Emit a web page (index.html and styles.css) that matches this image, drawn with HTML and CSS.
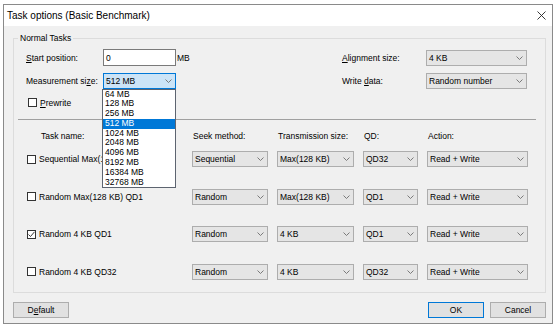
FILE: index.html
```html
<!DOCTYPE html>
<html>
  <head>
    <meta charset="utf-8" />
    <title>Task options (Basic Benchmark)</title>
    <link rel="stylesheet" href="styles.css">
  </head>
  <body>
    <div class="window">
      <div class="titlebar">
        <span class="title">Task options (Basic Benchmark)</span>
        <svg class="close" width="9" height="9" viewBox="0 0 9 9">
          <path d="M0.5 0.5 8.5 8.5 M8.5 0.5 0.5 8.5" />
        </svg>
      </div>

      <div class="client">
        <fieldset class="group">
          <legend>Normal Tasks</legend>

          <div class="settings">
            <span class="label"><u>S</u>tart position:</span>
            <div class="edit">0</div>
            <span class="unit">MB</span>
            <span class="label"><u>A</u>lignment size:</span>
            <div class="combo">
              <span>4 KB</span>
              <svg class="chev" width="7" height="4" viewBox="0 0 7 4"><path d="M0.5 0.5 3.5 3.5 6.5 0.5" /></svg>
            </div>

            <span class="label">Measurement si<u>z</u>e:</span>
            <div class="combo focus">
              <span>512 MB</span>
              <svg class="chev" width="7" height="4" viewBox="0 0 7 4"><path d="M0.5 0.5 3.5 3.5 6.5 0.5" /></svg>
              <ul class="droplist">
                <li>64 MB</li>
                <li>128 MB</li>
                <li>256 MB</li>
                <li class="sel">512 MB</li>
                <li>1024 MB</li>
                <li>2048 MB</li>
                <li>4096 MB</li>
                <li>8192 MB</li>
                <li>16384 MB</li>
                <li>32768 MB</li>
              </ul>
            </div>
            <span></span>
            <span class="label">Write <u>d</u>ata:</span>
            <div class="combo">
              <span>Random number</span>
              <svg class="chev" width="7" height="4" viewBox="0 0 7 4"><path d="M0.5 0.5 3.5 3.5 6.5 0.5" /></svg>
            </div>
          </div>

          <div class="check prewrite">
            <span class="box"></span>
            <span><u>P</u>rewrite</span>
          </div>

          <hr class="sep">

          <div class="tasks thead">
            <span class="name-head">Task name:</span>
            <span class="col-head">Seek method:</span>
            <span class="col-head">Transmission size:</span>
            <span class="col-head">QD:</span>
            <span class="col-head">Action:</span>
          </div>

          <div class="tasks trows">
            <div class="check">
              <span class="box"></span>
              <span class="clip">Sequential Max(128 KB) QD32</span>
            </div>
            <div class="combo"><span>Sequential</span><svg class="chev" width="7" height="4" viewBox="0 0 7 4"><path d="M0.5 0.5 3.5 3.5 6.5 0.5" /></svg></div>
            <div class="combo"><span>Max(128 KB)</span><svg class="chev" width="7" height="4" viewBox="0 0 7 4"><path d="M0.5 0.5 3.5 3.5 6.5 0.5" /></svg></div>
            <div class="combo"><span>QD32</span><svg class="chev" width="7" height="4" viewBox="0 0 7 4"><path d="M0.5 0.5 3.5 3.5 6.5 0.5" /></svg></div>
            <div class="combo"><span>Read + Write</span><svg class="chev" width="7" height="4" viewBox="0 0 7 4"><path d="M0.5 0.5 3.5 3.5 6.5 0.5" /></svg></div>

            <div class="check">
              <span class="box"></span>
              <span>Random Max(128 KB) QD1</span>
            </div>
            <div class="combo"><span>Random</span><svg class="chev" width="7" height="4" viewBox="0 0 7 4"><path d="M0.5 0.5 3.5 3.5 6.5 0.5" /></svg></div>
            <div class="combo"><span>Max(128 KB)</span><svg class="chev" width="7" height="4" viewBox="0 0 7 4"><path d="M0.5 0.5 3.5 3.5 6.5 0.5" /></svg></div>
            <div class="combo"><span>QD1</span><svg class="chev" width="7" height="4" viewBox="0 0 7 4"><path d="M0.5 0.5 3.5 3.5 6.5 0.5" /></svg></div>
            <div class="combo"><span>Read + Write</span><svg class="chev" width="7" height="4" viewBox="0 0 7 4"><path d="M0.5 0.5 3.5 3.5 6.5 0.5" /></svg></div>

            <div class="check">
              <span class="box checked">
                <svg width="7" height="7" viewBox="0 0 7 7"><path d="M0.5 3.5 2.5 5.5 6.5 0.8" /></svg>
              </span>
              <span>Random 4 KB QD1</span>
            </div>
            <div class="combo"><span>Random</span><svg class="chev" width="7" height="4" viewBox="0 0 7 4"><path d="M0.5 0.5 3.5 3.5 6.5 0.5" /></svg></div>
            <div class="combo"><span>4 KB</span><svg class="chev" width="7" height="4" viewBox="0 0 7 4"><path d="M0.5 0.5 3.5 3.5 6.5 0.5" /></svg></div>
            <div class="combo"><span>QD1</span><svg class="chev" width="7" height="4" viewBox="0 0 7 4"><path d="M0.5 0.5 3.5 3.5 6.5 0.5" /></svg></div>
            <div class="combo"><span>Read + Write</span><svg class="chev" width="7" height="4" viewBox="0 0 7 4"><path d="M0.5 0.5 3.5 3.5 6.5 0.5" /></svg></div>

            <div class="check">
              <span class="box"></span>
              <span>Random 4 KB QD32</span>
            </div>
            <div class="combo"><span>Random</span><svg class="chev" width="7" height="4" viewBox="0 0 7 4"><path d="M0.5 0.5 3.5 3.5 6.5 0.5" /></svg></div>
            <div class="combo"><span>4 KB</span><svg class="chev" width="7" height="4" viewBox="0 0 7 4"><path d="M0.5 0.5 3.5 3.5 6.5 0.5" /></svg></div>
            <div class="combo"><span>QD32</span><svg class="chev" width="7" height="4" viewBox="0 0 7 4"><path d="M0.5 0.5 3.5 3.5 6.5 0.5" /></svg></div>
            <div class="combo"><span>Read + Write</span><svg class="chev" width="7" height="4" viewBox="0 0 7 4"><path d="M0.5 0.5 3.5 3.5 6.5 0.5" /></svg></div>
          </div>
        </fieldset>

        <div class="buttons">
          <div class="button">D<u>e</u>fault</div>
          <div class="button default">OK</div>
          <div class="button">Cancel</div>
        </div>
      </div>
    </div>
  </body>
</html>
```

FILE: styles.css
```css
html,
body {
  margin: 0;
  padding: 0;
  background-color: #fff;
}

body {
  font-family: "Liberation Sans", Arial, sans-serif;
  font-size: 8.5px;
  color: #000;
}

.window {
  margin: 4px 0 0 3px;
  width: 550px;
  box-sizing: border-box;
  border: 1px solid #8a8a8a;
  background-color: #f0f0f0;
}

.titlebar {
  height: 21px;
  background-color: #fff;
  display: flex;
  align-items: center;
  justify-content: space-between;
  padding: 0 6px 0 3px;
  font-size: 10px;
}

.close path {
  stroke: #222;
  stroke-width: 0.9;
  fill: none;
}

.client {
  padding: 7px 6px 5px 9px;
}

.group {
  margin: 0;
  padding: 5px 0 12px 0;
  border: 1px solid #dcdcdc;
  min-width: 0;
}

.group legend {
  margin-left: 4px;
  padding: 0 2px;
  line-height: 11px;
}

/* top settings */
.settings {
  display: grid;
  grid-template-columns: 77px 73px 166px 84px 101px;
  grid-template-rows: 17px 17px;
  row-gap: 6px;
  align-items: center;
  margin-left: 12px;
}

.unit {
  padding-left: 1px;
}

.edit {
  height: 17px;
  box-sizing: border-box;
  border: 1px solid #7a7a7a;
  background-color: #fff;
  padding-left: 2px;
  display: flex;
  align-items: center;
}

.combo {
  position: relative;
  height: 16px;
  box-sizing: border-box;
  border: 1px solid #adadad;
  background-color: #e5e5e5;
  display: flex;
  align-items: center;
  justify-content: space-between;
  padding: 0 3px 0 2px;
  white-space: nowrap;
}

.combo.focus {
  border-color: #0078d7;
  background-color: #cce4f7;
}

.chev path {
  stroke: #6d6d6d;
  stroke-width: 0.9;
  fill: none;
}

.droplist {
  position: absolute;
  left: -2px;
  top: 15px;
  width: 74px;
  box-sizing: border-box;
  margin: 0;
  padding: 0;
  list-style: none;
  border: 1px solid #5d6470;
  background-color: #fff;
  z-index: 2;
}

.droplist li {
  height: 9.8px;
  line-height: 9.8px;
  padding-left: 2px;
}

.droplist li.sel {
  background-color: #0078d7;
  color: #fff;
}

/* checkboxes */
.check {
  display: flex;
  align-items: center;
  gap: 3px;
  white-space: nowrap;
}

.clip {
  max-width: 63px;
  overflow: hidden;
}

.box {
  width: 9px;
  height: 9px;
  box-sizing: border-box;
  border: 1px solid #333;
  background-color: #fff;
  display: flex;
  align-items: center;
  justify-content: center;
  flex: none;
}

.box path {
  stroke: #222;
  stroke-width: 0.9;
  fill: none;
}

.prewrite {
  height: 11px;
  margin: 8px 0 0 14px;
}

.sep {
  height: 0;
  margin: 11px 9px 0 4px;
  border: 0;
  border-top: 1px solid #a0a0a0;
}

/* task table */
.tasks {
  display: grid;
  grid-template-columns: 156px 76px 77px 55px 101px;
  column-gap: 9px;
  margin-left: 13px;
}

.thead {
  margin-top: 11px;
  height: 11px;
  line-height: 11px;
}

.name-head {
  padding-left: 14px;
}

.col-head {
  padding-left: 1px;
}

.trows {
  margin-top: 9px;
  grid-auto-rows: 16px;
  row-gap: 21.5px;
  align-items: center;
}

/* buttons */
.buttons {
  display: flex;
  gap: 6px;
  margin-top: 9px;
}

.button {
  width: 56px;
  height: 16px;
  box-sizing: border-box;
  border: 1px solid #adadad;
  background-color: #e1e1e1;
  display: flex;
  align-items: center;
  justify-content: center;
}

.button:first-child {
  margin-right: auto;
}

.button.default {
  border-color: #0078d7;
}
```
